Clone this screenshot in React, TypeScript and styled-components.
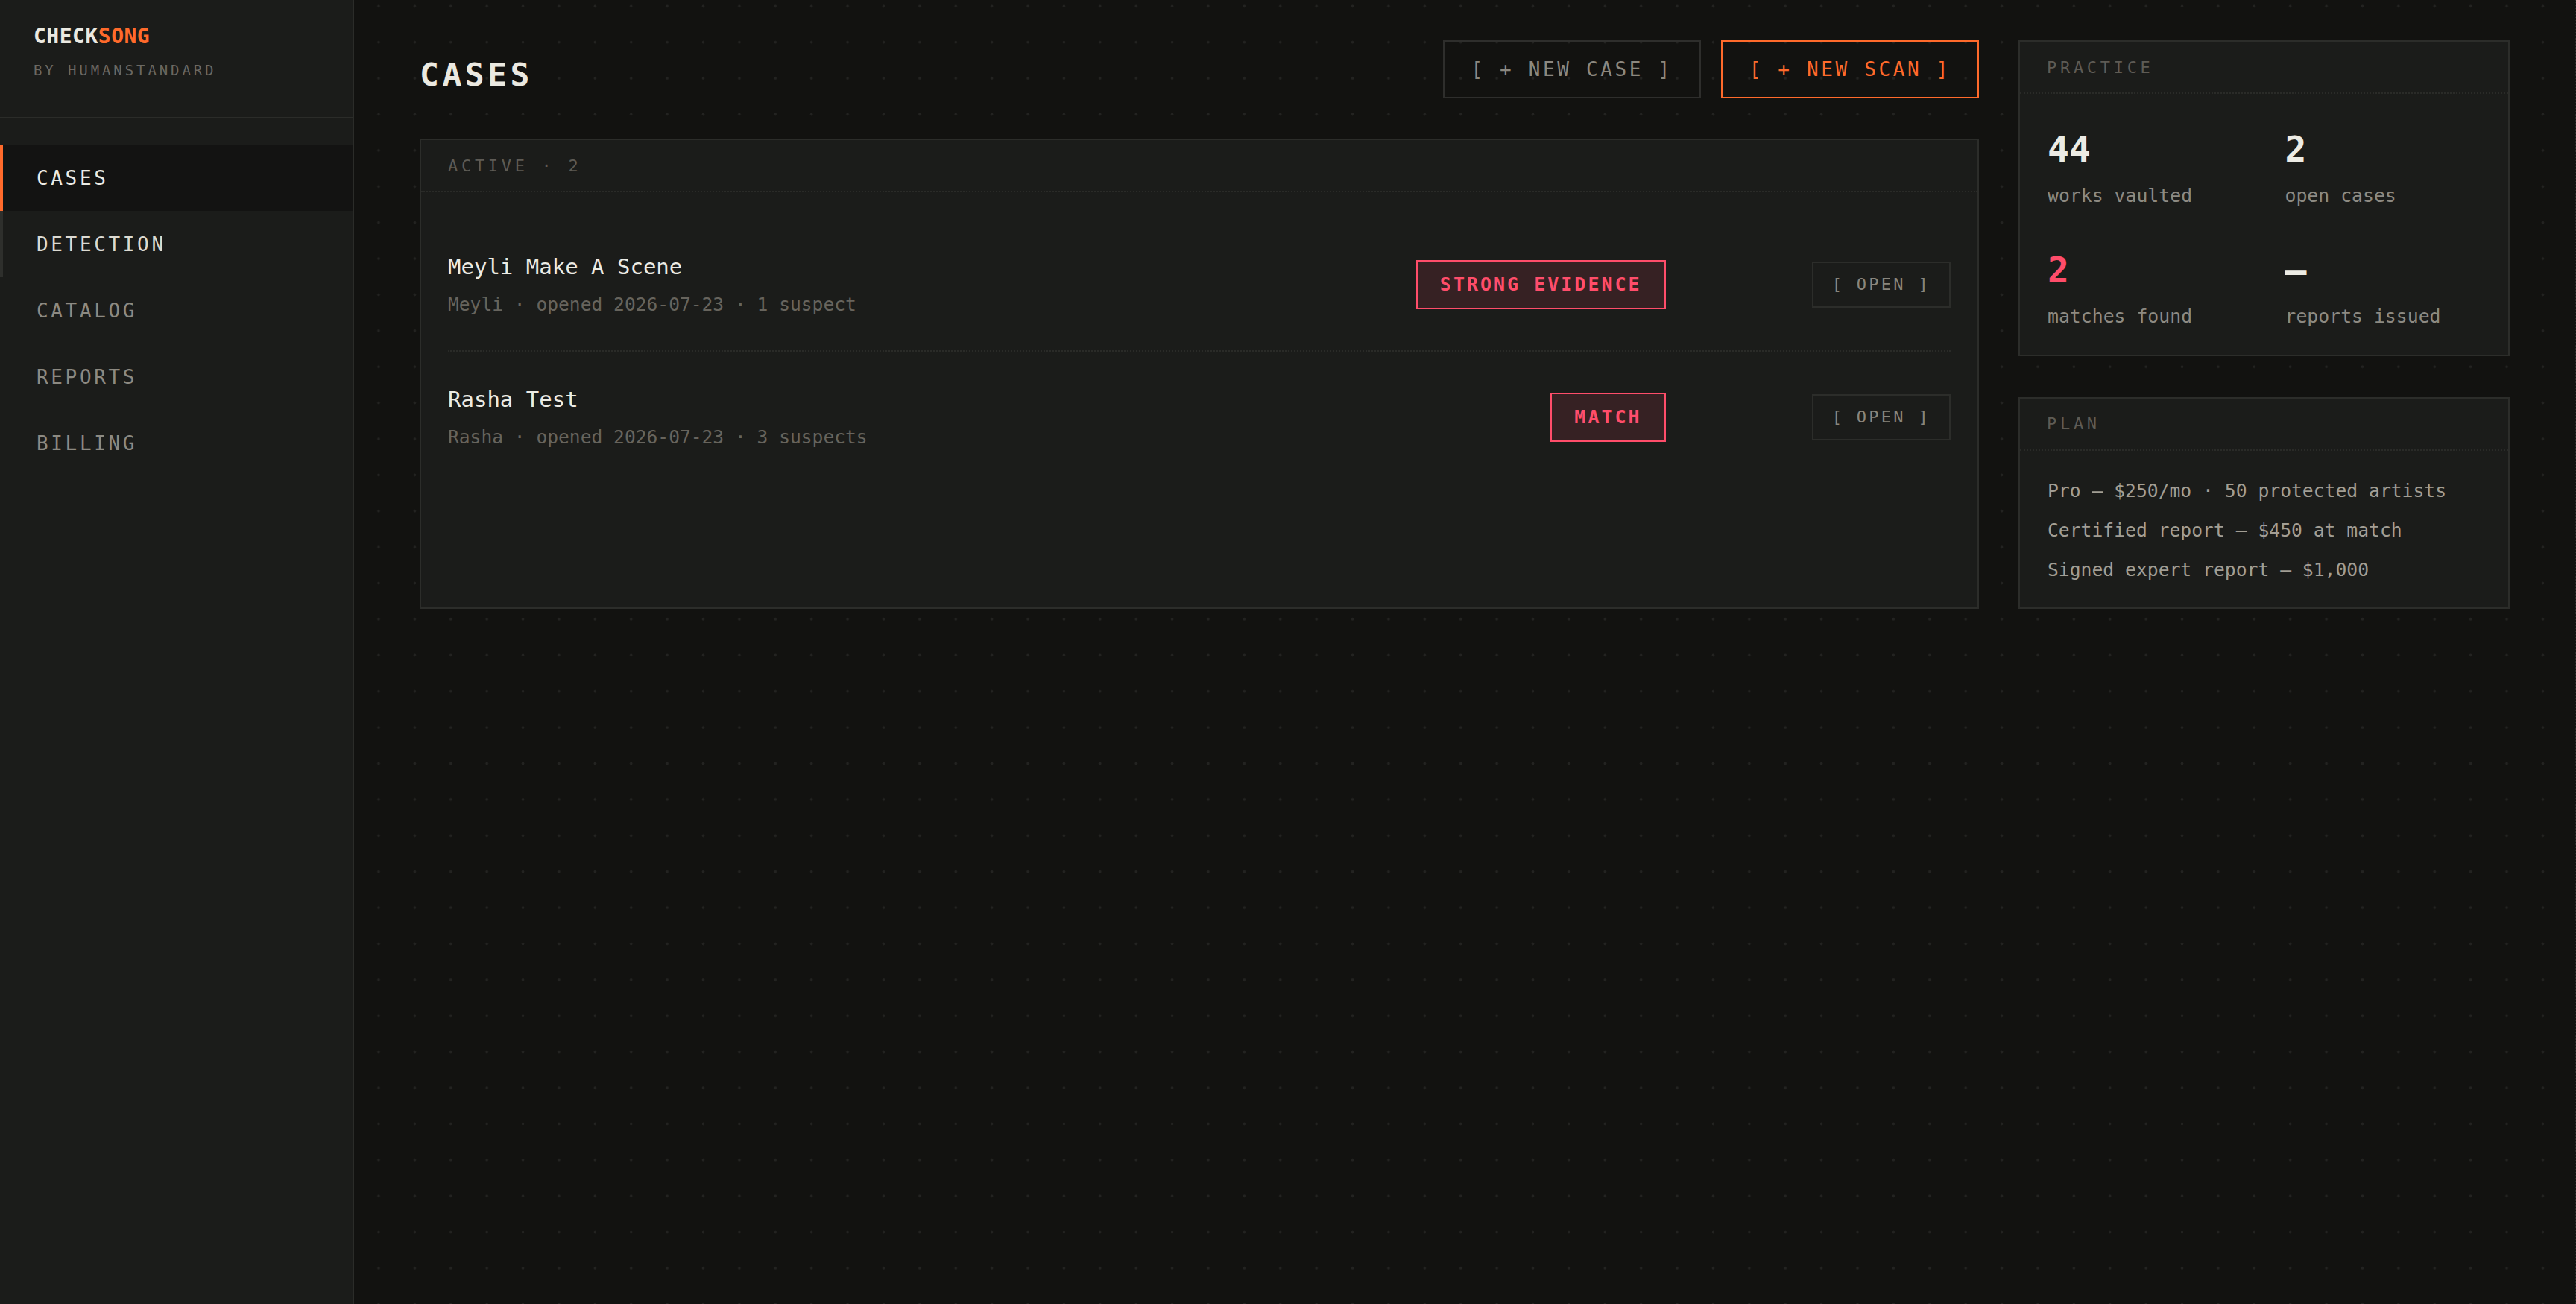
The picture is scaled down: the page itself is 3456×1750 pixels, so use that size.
import React from "react";
import styled, { createGlobalStyle, css } from "styled-components";

const mono = `"DejaVu Sans Mono", "Liberation Mono", monospace`;

const GlobalStyle = createGlobalStyle`
  html, body {
    margin: 0;
    padding: 0;
    background: #121210;
    font-family: ${mono};
  }
  * { box-sizing: border-box; }
`;

const Shell = styled.div`
  display: flex;
  min-height: 100vh;
  background: #121210;
`;

/* ---------- sidebar ---------- */

const Sidebar = styled.aside`
  width: 475px;
  flex-shrink: 0;
  background: #1b1c1a;
  border-right: 2px solid #2b2c29;
  display: flex;
  flex-direction: column;
`;

const Brand = styled.div`
  padding: 32px 45px 51px;
  border-bottom: 2px solid #2b2c29;
`;

const Logo = styled.div`
  font-size: 28px;
  line-height: 1.2;
  font-weight: 700;
  letter-spacing: 0.5px;
  color: #ebe9e1;
  margin-bottom: 16px;

  span {
    color: #ff6a2b;
  }
`;

const Byline = styled.div`
  font-size: 19px;
  line-height: 1.3;
  letter-spacing: 3.9px;
  color: #6b6862;
`;

const Nav = styled.nav`
  display: flex;
  flex-direction: column;
  padding-top: 35px;
`;

const NavItem = styled.a<{ $active?: boolean; $hover?: boolean }>`
  display: flex;
  align-items: center;
  height: 89px;
  padding-left: 45px;
  border-left: 4px solid transparent;
  font-size: 26px;
  letter-spacing: 3.65px;
  color: #8d8a82;
  cursor: pointer;

  ${(p) =>
    p.$hover &&
    css`
      border-left-color: #2e2f2c;
      color: #dcdad2;
    `}

  ${(p) =>
    p.$active &&
    css`
      background: #131312;
      border-left-color: #ff6a2b;
      color: #ecebe4;
    `}
`;

/* ---------- main ---------- */

const Main = styled.main`
  flex: 1;
  padding: 54px 88px 54px 88px;
  border-right: 1px dotted #2a2a28;
  background-color: #121210;
  background-image: radial-gradient(circle, #232321 0 1.6px, transparent 2.2px);
  background-size: 48.4px 48.4px;
  background-position: 8.8px -15.9px;
`;

const Layout = styled.div`
  display: grid;
  grid-template-columns: 1fr 659px;
  column-gap: 53px;
  align-items: stretch;
`;

const LeftColumn = styled.div`
  display: flex;
  flex-direction: column;
  gap: 54px;
`;

const TopBar = styled.div`
  display: flex;
  align-items: center;
  justify-content: space-between;
  height: 78px;
`;

const PageTitle = styled.h1`
  margin: 0;
  padding-top: 16px;
  font-size: 43px;
  line-height: 1.2;
  font-weight: 700;
  letter-spacing: 4.5px;
  color: #ebe9e1;
`;

const Actions = styled.div`
  display: flex;
  gap: 27px;
`;

const ActionButton = styled.button<{ $primary?: boolean }>`
  height: 78px;
  padding: 0 36px;
  background: transparent;
  border: 2px solid ${(p) => (p.$primary ? "#ff6a2b" : "#2e2e2c")};
  color: ${(p) => (p.$primary ? "#ff6a2b" : "#8c887f")};
  font-family: ${mono};
  font-size: 26px;
  letter-spacing: 3.65px;
  cursor: pointer;
`;

const Card = styled.section<{ $grow?: boolean }>`
  background: #1b1c1a;
  border: 2px solid #2c2d2a;
  display: flex;
  flex-direction: column;
  ${(p) => p.$grow && "flex: 1;"}
`;

const CardHeader = styled.div`
  height: 70px;
  display: flex;
  align-items: center;
  padding: 0 36px;
  border-bottom: 2px dotted #2a2b28;
  font-size: 22px;
  letter-spacing: 4.7px;
  color: #5e5b55;
`;

const CaseList = styled.div`
  padding: 35px 36px 0;
`;

const CaseRow = styled.div`
  display: flex;
  align-items: center;
  height: 177px;

  & + & {
    border-top: 2px dotted #2a2b28;
  }
`;

const CaseInfo = styled.div`
  flex: 1;
  display: flex;
  flex-direction: column;
  gap: 14px;
  padding-top: 4px;
`;

const CaseTitle = styled.div`
  font-size: 29px;
  line-height: 1.3;
  color: #ecebe4;
`;

const CaseMeta = styled.div`
  font-size: 24.6px;
  line-height: 1.4;
  color: #67645d;
`;

const Verdict = styled.span`
  display: inline-flex;
  align-items: center;
  height: 66px;
  padding: 0 30px;
  border: 2px solid #ff4d6a;
  background: rgba(255, 77, 106, 0.12);
  color: #ff4d6a;
  font-size: 25px;
  font-weight: 700;
  letter-spacing: 3px;
`;

const OpenButton = styled.button`
  margin-left: 196px;
  height: 62px;
  padding: 0 25px;
  background: transparent;
  border: 2px solid #2c2d2a;
  color: #8a867d;
  font-family: ${mono};
  font-size: 22px;
  letter-spacing: 3.3px;
  cursor: pointer;
`;

const RightColumn = styled.div`
  display: flex;
  flex-direction: column;
  gap: 55px;
`;

const StatGrid = styled.div`
  display: grid;
  grid-template-columns: 1fr 1fr;
  column-gap: 56px;
  row-gap: 54px;
  padding: 46px 37px 33px;
`;

const Stat = styled.div`
  display: flex;
  flex-direction: column;
  gap: 16px;
`;

const StatValue = styled.div<{ $alert?: boolean }>`
  font-size: 48px;
  line-height: 1.2;
  font-weight: 700;
  color: ${(p) => (p.$alert ? "#ff4d6a" : "#ecebe4")};
`;

const StatLabel = styled.div`
  font-size: 24.8px;
  line-height: 1.4;
  color: #8d8a82;
`;

const PlanList = styled.div`
  display: flex;
  flex-direction: column;
  gap: 17.4px;
  padding: 36px 37px 32px;
`;

const PlanLine = styled.div`
  font-size: 24.7px;
  line-height: 36px;
  color: #a29e94;
`;

const navItems = ["CASES", "DETECTION", "CATALOG", "REPORTS", "BILLING"];

const cases = [
  {
    title: "Meyli Make A Scene",
    meta: "Meyli · opened 2026-07-23 · 1 suspect",
    verdict: "STRONG EVIDENCE",
  },
  {
    title: "Rasha Test",
    meta: "Rasha · opened 2026-07-23 · 3 suspects",
    verdict: "MATCH",
  },
];

const stats = [
  { value: "44", label: "works vaulted" },
  { value: "2", label: "open cases" },
  { value: "2", label: "matches found", alert: true },
  { value: "—", label: "reports issued" },
];

const plan = [
  "Pro — $250/mo · 50 protected artists",
  "Certified report — $450 at match",
  "Signed expert report — $1,000",
];

export default function App() {
  return (
    <>
      <GlobalStyle />
      <Shell>
        <Sidebar>
          <Brand>
            <Logo>
              CHECK<span>SONG</span>
            </Logo>
            <Byline>BY HUMANSTANDARD</Byline>
          </Brand>
          <Nav>
            {navItems.map((item) => (
              <NavItem
                key={item}
                $active={item === "CASES"}
                $hover={item === "DETECTION"}
              >
                {item}
              </NavItem>
            ))}
          </Nav>
        </Sidebar>

        <Main>
          <Layout>
            <LeftColumn>
              <TopBar>
                <PageTitle>CASES</PageTitle>
                <Actions>
                  <ActionButton>[ + NEW CASE ]</ActionButton>
                  <ActionButton $primary>[ + NEW SCAN ]</ActionButton>
                </Actions>
              </TopBar>

              <Card $grow>
                <CardHeader>ACTIVE · {cases.length}</CardHeader>
                <CaseList>
                  {cases.map((c) => (
                    <CaseRow key={c.title}>
                      <CaseInfo>
                        <CaseTitle>{c.title}</CaseTitle>
                        <CaseMeta>{c.meta}</CaseMeta>
                      </CaseInfo>
                      <Verdict>{c.verdict}</Verdict>
                      <OpenButton>[ OPEN ]</OpenButton>
                    </CaseRow>
                  ))}
                </CaseList>
              </Card>
            </LeftColumn>

            <RightColumn>
              <Card>
                <CardHeader>PRACTICE</CardHeader>
                <StatGrid>
                  {stats.map((s) => (
                    <Stat key={s.label}>
                      <StatValue $alert={s.alert}>{s.value}</StatValue>
                      <StatLabel>{s.label}</StatLabel>
                    </Stat>
                  ))}
                </StatGrid>
              </Card>

              <Card>
                <CardHeader>PLAN</CardHeader>
                <PlanList>
                  {plan.map((line) => (
                    <PlanLine key={line}>{line}</PlanLine>
                  ))}
                </PlanList>
              </Card>
            </RightColumn>
          </Layout>
        </Main>
      </Shell>
    </>
  );
}
